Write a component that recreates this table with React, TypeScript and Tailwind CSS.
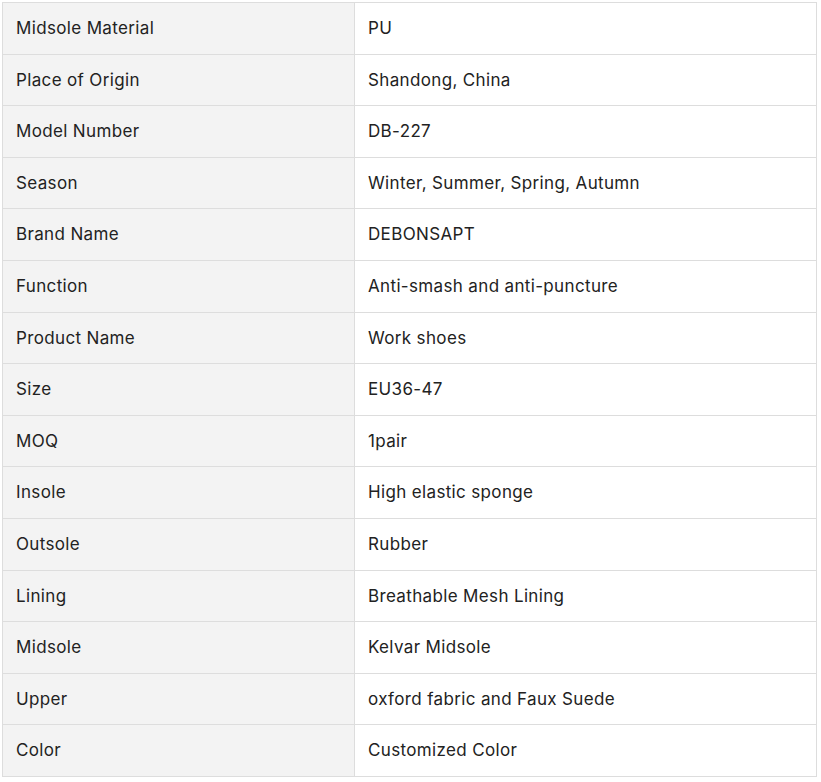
const specs: [string, string][] = [
  ["Midsole Material", "PU"],
  ["Place of Origin", "Shandong, China"],
  ["Model Number", "DB-227"],
  ["Season", "Winter, Summer, Spring, Autumn"],
  ["Brand Name", "DEBONSAPT"],
  ["Function", "Anti-smash and anti-puncture"],
  ["Product Name", "Work shoes"],
  ["Size", "EU36-47"],
  ["MOQ", "1pair"],
  ["Insole", "High elastic sponge"],
  ["Outsole", "Rubber"],
  ["Lining", "Breathable Mesh Lining"],
  ["Midsole", "Kelvar Midsole"],
  ["Upper", "oxford fabric and Faux Suede"],
  ["Color", "Customized Color"],
];

export default function App() {
  return (
    <div className="min-h-screen bg-white pt-[2px] pl-[2px]" style={{ fontFamily: "Inter, 'Noto Sans', sans-serif" }}>
      <table className="w-[815px] h-[775px] border-collapse text-[17px] tracking-[0.35px] text-[#222]">
        <tbody>
          {specs.map(([k, v]) => (
            <tr key={k}>
              <td className="w-[352px] border border-[#dddddd] bg-[#f3f3f3] px-[13px] pt-[1px] align-middle">{k}</td>
              <td className="border border-[#dddddd] px-[13px] pt-[1px] align-middle">{v}</td>
            </tr>
          ))}
        </tbody>
      </table>
    </div>
  );
}
